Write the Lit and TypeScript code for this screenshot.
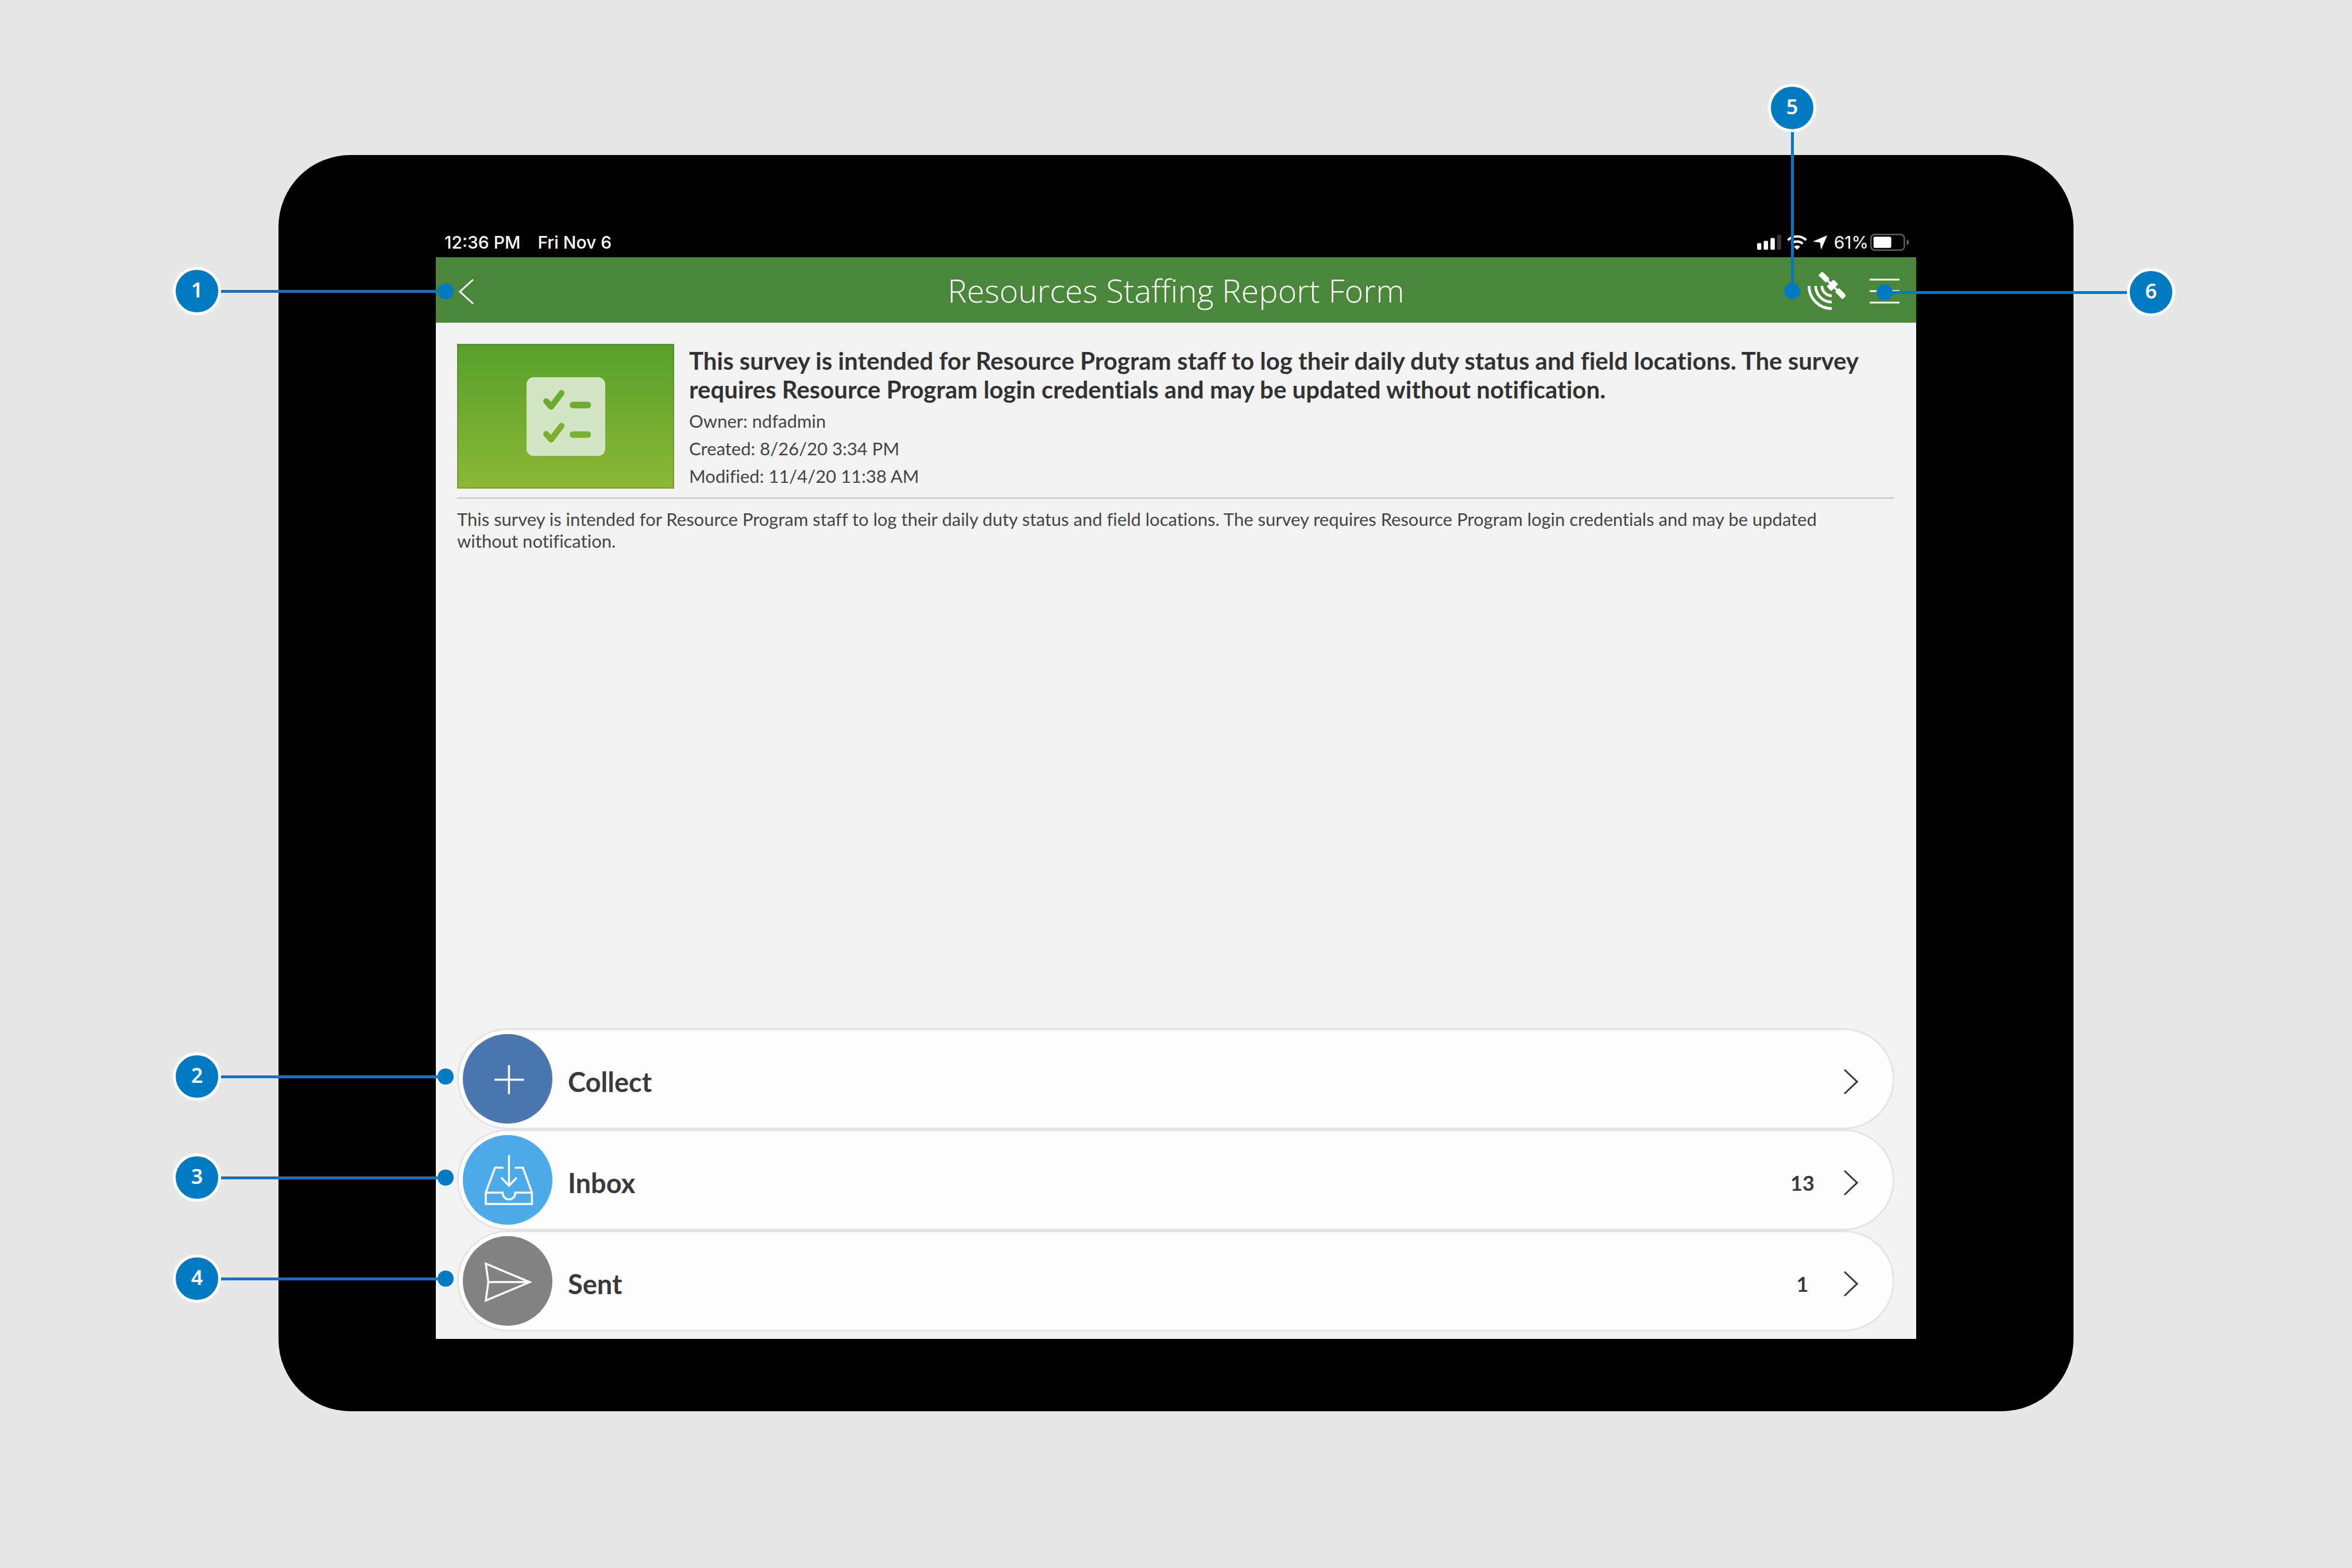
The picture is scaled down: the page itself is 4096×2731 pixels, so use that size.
import { LitElement, html, css, svg, nothing } from "lit";
import { customElement, property } from "lit/decorators.js";
import { classMap } from "lit/directives/class-map.js";

type ActionKind = "collect" | "inbox" | "sent";

interface SurveyAction {
  kind: ActionKind;
  label: string;
  count?: number;
  step: number;
}

const actions: SurveyAction[] = [
  { kind: "collect", label: "Collect", step: 2 },
  { kind: "inbox", label: "Inbox", count: 13, step: 3 },
  { kind: "sent", label: "Sent", count: 1, step: 4 },
];

const summary =
  "This survey is intended for Resource Program staff to log their daily duty status and field locations. The survey requires Resource Program login credentials and may be updated without notification.";

// Each glyph is drawn on the 495-unit square that its round badge fills.
const glyphs = {
  collect: svg`<path d="M255 172V332M175 252H337" />`,
  inbox: svg`
    <path d="M224 180H178L127 318V381H382V318L332 180H288" />
    <path d="M127 318H220C220 341 235 355 255 355C275 355 290 341 290 318H382" />
    <path d="M255 110V280M212 235L255 280L298 235" />`,
  sent: svg`
    <path d="M127 152L370 254L127 356L141 254Z" />
    <path d="M141 254H370" />`,
};

@customElement("step-callout")
export class StepCallout extends LitElement {
  @property({ type: Number }) step = 0;
  @property({ reflect: true }) side: "left" | "right" | "top" = "left";

  static styles = css`
    :host {
      display: flex;
      align-items: center;
      pointer-events: none;
    }
    :host([side="right"]) {
      flex-direction: row-reverse;
    }
    :host([side="top"]) {
      flex-direction: column;
    }
    .badge {
      box-sizing: border-box;
      flex: none;
      display: flex;
      align-items: center;
      justify-content: center;
      width: 84px;
      height: 84px;
      padding-bottom: 4px;
      border: 5px solid #ffffff;
      border-radius: 50%;
      background: #007ac2;
      color: #ffffff;
      font: 600 36px/44px "Noto Sans", "Open Sans", sans-serif;
    }
    .line {
      flex: 1;
      height: 5px;
      background: #007ac2;
    }
    :host([side="top"]) .line {
      width: 5px;
      height: auto;
    }
    .dot {
      flex: none;
      width: 28px;
      height: 28px;
      border-radius: 50%;
      background: #007ac2;
    }
  `;

  render() {
    return html`<span class="badge">${this.step}</span><span class="line"></span><span class="dot"></span>`;
  }
}

@customElement("status-bar")
export class StatusBar extends LitElement {
  static styles = css`
    :host {
      box-sizing: border-box;
      display: flex;
      justify-content: space-between;
      align-items: center;
      height: 56px;
      padding: 4px 12px 0 15px;
      color: #ffffff;
      font: 500 30px/36px Inter, Roboto, sans-serif;
    }
    .clock {
      display: flex;
      gap: 30px;
    }
    .system {
      display: flex;
      align-items: center;
    }
    .signal {
      width: 42px;
      height: 26px;
      margin-right: 10px;
    }
    .wifi {
      width: 35px;
      height: 26px;
      margin-right: 11px;
    }
    .location {
      width: 24px;
      height: 24px;
      margin-right: 12px;
    }
    .charge {
      font-weight: 400;
    }
    .battery {
      width: 68px;
      height: 30px;
      margin-left: 3px;
    }
  `;

  render() {
    return html`
      <div class="clock"><span>12:36 PM</span><span>Fri Nov 6</span></div>
      <div class="system">
        <svg class="signal" viewBox="0 0 132 81" fill="#ffffff" aria-hidden="true">
          <rect x="0" y="45" width="23" height="36" rx="6" />
          <rect x="36" y="33" width="24" height="48" rx="6" />
          <rect x="73" y="17" width="24" height="64" rx="6" />
          <rect x="109" y="0" width="23" height="81" rx="6" fill="#363636" />
        </svg>
        <svg class="wifi" viewBox="0 0 110 82" fill="none" stroke="#ffffff" stroke-width="13" aria-hidden="true">
          <path d="M5 29A72 72 0 0 1 105 29" />
          <path d="M24 49A45 45 0 0 1 86 49" />
          <path d="M55 82L38 65A25 25 0 0 1 72 65Z" fill="#ffffff" stroke="none" />
        </svg>
        <svg class="location" viewBox="0 0 74 74" aria-hidden="true">
          <path
            d="M72 2L42 72L37 37L2 32Z"
            fill="#ffffff"
            stroke="#ffffff"
            stroke-width="3"
            stroke-linejoin="round"
          />
        </svg>
        <span class="charge">61%</span>
        <svg class="battery" viewBox="0 0 214 94" aria-hidden="true">
          <rect x="4" y="4" width="183" height="86" rx="20" fill="none" stroke="#6a6a6a" stroke-width="7" />
          <rect x="18" y="16" width="97" height="62" rx="9" fill="#ffffff" />
          <path d="M200 31Q212 38 212 47Q212 56 200 63Z" fill="#6a6a6a" />
        </svg>
      </div>
    `;
  }
}

@customElement("survey-header")
export class SurveyHeader extends LitElement {
  @property() heading = "";

  static styles = css`
    :host {
      box-sizing: border-box;
      position: relative;
      display: grid;
      grid-template-columns: 1fr auto 1fr;
      align-items: center;
      height: 114px;
      padding: 0 29px;
      background: #4a873b;
      color: #ffffff;
    }
    h1 {
      margin: 0;
      font: 300 56px/72px "Open Sans", "Noto Sans", sans-serif;
    }
    button {
      display: block;
      padding: 0;
      border: 0;
      background: none;
    }
    svg {
      display: block;
      fill: none;
      stroke: #ffffff;
    }
    .back {
      justify-self: start;
      padding: 6px 11px 0;
    }
    .back svg {
      width: 26px;
      height: 44px;
    }
    .tools {
      justify-self: end;
      display: flex;
      align-items: center;
      gap: 42px;
      padding-top: 4px;
    }
    .gps svg {
      width: 66px;
      height: 66px;
    }
    .menu svg {
      width: 52px;
      height: 44px;
    }
    step-callout {
      position: absolute;
    }
    .to-back {
      top: calc(50% - 40px);
      right: calc(100% - 31px);
      width: 489px;
    }
    .to-menu {
      top: calc(50% - 38px);
      left: calc(100% - 69px);
      width: 520px;
    }
    .to-gps {
      bottom: calc(100% - 73px);
      right: 174px;
      height: 375px;
    }
  `;

  render() {
    return html`
      <button class="back" aria-label="Back">
        <svg viewBox="0 0 26 44" stroke-width="3"><path d="M25 1L2 22L25 43" /></svg>
      </button>
      <h1>${this.heading}</h1>
      <div class="tools">
        <button class="gps" aria-label="Location status">
          <svg viewBox="0 0 69 69">
            <path
              d="M2.5 25A41.5 41.5 0 0 0 44 66.500M14.500 25A29.500 29.500 0 0 0 44 54.500M26 25A18 18 0 0 0 44 43"
              stroke-width="5"
            />
            <g transform="translate(45 24) rotate(45)" fill="#ffffff" stroke="none">
              <rect x="-31" y="-5" width="19" height="10" rx="1" />
              <rect x="12" y="-5" width="19" height="10" rx="1" />
              <rect x="-6" y="-9" width="12" height="18" rx="2" />
              <rect x="-13" y="-2" width="26" height="4" />
            </g>
          </svg>
        </button>
        <button class="menu" aria-label="Menu">
          <svg viewBox="0 0 52 44" stroke-width="3"><path d="M0 2H52M0 22H52M0 42H52" /></svg>
        </button>
      </div>
      <step-callout class="to-back" step="1"></step-callout>
      <step-callout class="to-gps" step="5" side="top"></step-callout>
      <step-callout class="to-menu" step="6" side="right"></step-callout>
    `;
  }
}

@customElement("survey-summary")
export class SurveySummary extends LitElement {
  static styles = css`
    :host {
      display: block;
      color: #444444;
      font-family: Lato, "Open Sans", sans-serif;
      font-variant-ligatures: none;
    }
    .intro {
      display: flex;
      align-items: flex-start;
      gap: 26px;
      padding-bottom: 13px;
      border-bottom: 3px solid #d0d0d0;
    }
    .thumb {
      box-sizing: border-box;
      flex: none;
      display: flex;
      align-items: center;
      justify-content: center;
      width: 378px;
      height: 252px;
      border: 2px solid rgba(70, 90, 40, 0.3);
      background: linear-gradient(#57a02b, #8cb836) border-box;
    }
    .thumb svg {
      width: 137px;
      height: 137px;
    }
    .facts {
      flex: 1;
      padding-top: 4px;
    }
    h2 {
      margin: 0 0 6px;
      color: #323232;
      font-size: 42px;
      font-weight: 700;
      line-height: 50px;
    }
    .facts p {
      margin: 0;
      font-size: 31px;
      line-height: 48px;
    }
    .description {
      margin: 16px 0 0;
      padding-right: 40px;
      font-size: 31px;
      line-height: 38px;
    }
  `;

  render() {
    return html`
      <div class="intro">
        <div class="thumb">
          <svg viewBox="0 0 144 144" fill="none" stroke-linecap="round" stroke-linejoin="round" aria-hidden="true">
            <rect width="144" height="144" rx="13" fill="#d4e5c3" />
            <g stroke="#6cac30" stroke-width="11">
              <path d="M36 44L45 54L64 29" />
              <path d="M85 51H112" stroke-width="12" />
            </g>
            <g stroke="#79b032" stroke-width="11">
              <path d="M36 104L45 114L64 89" />
              <path d="M85 105H112" stroke-width="12" />
            </g>
          </svg>
        </div>
        <div class="facts">
          <h2>${summary}</h2>
          <p>Owner: ndfadmin</p>
          <p>Created: 8/26/20 3:34 PM</p>
          <p>Modified: 11/4/20 11:38 AM</p>
        </div>
      </div>
      <p class="description">${summary}</p>
    `;
  }
}

@customElement("action-list")
export class ActionList extends LitElement {
  static styles = css`
    ul {
      margin: 0;
      padding: 0;
      list-style: none;
    }
    li {
      position: relative;
    }
    .row {
      box-sizing: border-box;
      display: flex;
      align-items: stretch;
      width: 100%;
      height: 176px;
      padding: 7px 60px 7px 7px;
      border: 3px solid #e4e4e4;
      border-radius: 88px;
      background: #fefefe;
      color: #3a3a3a;
      font: 700 36px/44px Lato, "Open Sans", sans-serif;
      text-align: left;
    }
    .disc {
      flex: none;
      width: 156px;
      height: 156px;
      border-radius: 50%;
    }
    .disc svg {
      display: block;
      fill: none;
      stroke: #ffffff;
      stroke-width: 11;
    }
    .collect {
      background: #4c76ae;
    }
    .inbox {
      background: #4dabe9;
    }
    .sent {
      background: #828282;
    }
    .text {
      flex: 1;
      display: flex;
      align-items: center;
      padding: 10px 0 0 27px;
    }
    .label {
      flex: 1;
      font-size: 47px;
    }
    .count {
      width: 60px;
      margin-right: 42px;
      text-align: center;
    }
    .chevron {
      width: 25px;
      height: 44px;
      fill: none;
      stroke: #3a3a3a;
      stroke-width: 3;
    }
    step-callout {
      position: absolute;
      top: calc(50% - 46px);
      right: calc(100% + 6px);
      width: 489px;
    }
  `;

  private row(action: SurveyAction) {
    return html`
      <li>
        <button class="row">
          <span class=${classMap({ disc: true, [action.kind]: true })}>
            <svg viewBox="0 0 495 495" aria-hidden="true">${glyphs[action.kind]}</svg>
          </span>
          <span class="text">
            <span class="label">${action.label}</span>
            ${action.count === undefined ? nothing : html`<span class="count">${action.count}</span>`}
            <svg class="chevron" viewBox="0 0 25 44" aria-hidden="true"><path d="M1 1L23 22L1 43" /></svg>
          </span>
        </button>
        <step-callout step=${action.step}></step-callout>
      </li>
    `;
  }

  render() {
    return html`<ul>${actions.map((action) => this.row(action))}</ul>`;
  }
}

@customElement("app-root")
export class AppRoot extends LitElement {
  static styles = css`
    :host {
      box-sizing: border-box;
      display: flex;
      min-height: 100vh;
      padding: 270px 485px 273px;
      background: #e7e7e7;
    }
    .tablet {
      box-sizing: border-box;
      flex: 1;
      display: flex;
      flex-direction: column;
      padding: 122px 274px 126px;
      border-radius: 125px;
      background: #000000;
    }
    .screen {
      flex: 1;
      display: flex;
      flex-direction: column;
      justify-content: space-between;
      padding: 37px 38px 13px 37px;
      background: #f3f3f3;
    }
  `;

  render() {
    return html`
      <div class="tablet">
        <status-bar></status-bar>
        <survey-header heading="Resources Staffing Report Form"></survey-header>
        <main class="screen">
          <survey-summary></survey-summary>
          <action-list></action-list>
        </main>
      </div>
    `;
  }
}
